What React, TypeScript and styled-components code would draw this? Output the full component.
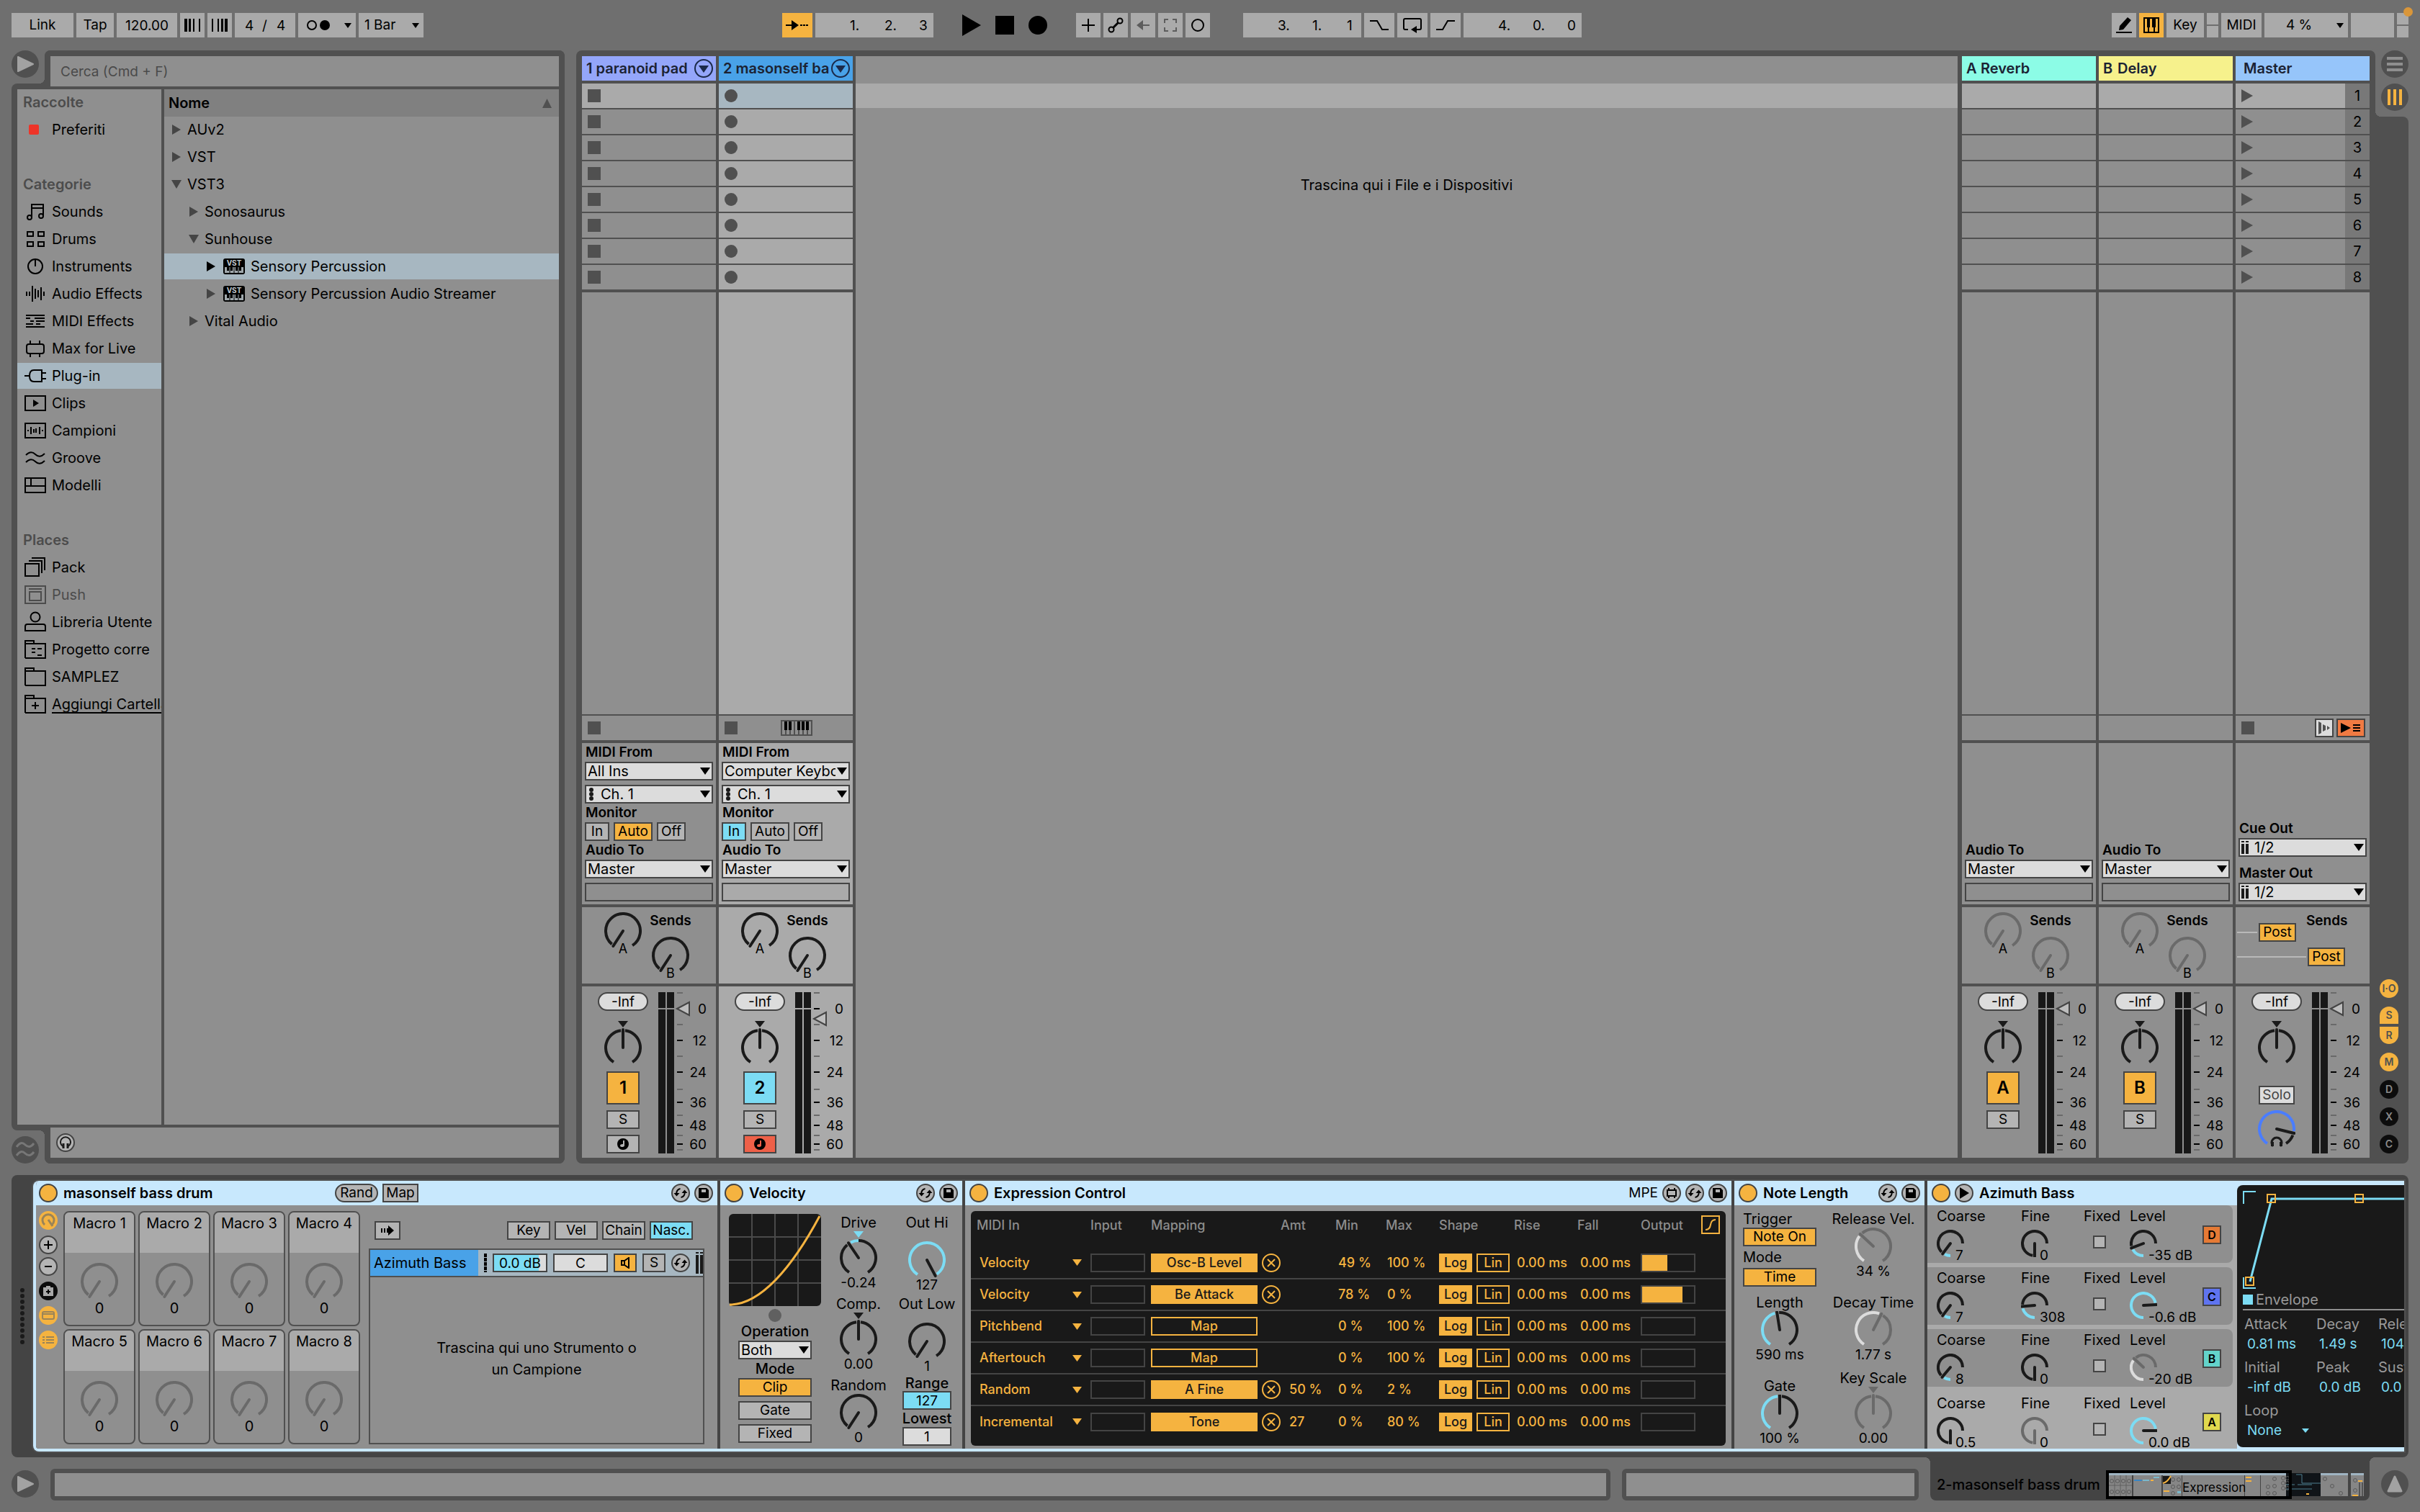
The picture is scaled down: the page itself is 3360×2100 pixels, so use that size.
import React, { ReactNode } from 'react';
import styled, { createGlobalStyle, css } from 'styled-components';

const c = {
  page: '#6f6f6f',
  frame: '#505050',
  deep: '#444444',
  surface: '#8f8f8f',
  light: '#aaaaaa',
  header: '#808080',
  number: '#787878',
  control: '#b4b4b4',
  field: '#dcdcdc',
  select: '#a7b7c1',
  orange: '#f5b340',
  cyan: '#7cdcf4',
  title: '#c8e8fd',
  ink: '#1a1a1a',
  dim: '#6a6a6a',
  red: '#ee6048',
};

const Global = createGlobalStyle`
  *, *::before, *::after { box-sizing: border-box; }
  html, body { margin: 0; background: ${c.page}; }
  body, button, input, select, table {
    font-family: Inter, "Liberation Sans", sans-serif;
    font-size: 20px;
    font-weight: 400;
    line-height: 22px;
    color: #000;
  }
  button, input, select { margin: 0; padding: 0; border: 0; border-radius: 0; outline: 0; }
  button, input { font-size: 19px; }
  svg { display: block; flex: none; }
`;

const Page = styled.div`
  min-height: 100vh;
  display: flex;
  flex-direction: column;
  overflow: hidden;
`;

/* ---------- shared controls ---------- */

const HiddenRange = styled.input`
  position: absolute;
  inset: 0;
  width: 100%;
  height: 100%;
  opacity: 0;
`;

const Button = styled.button<{ $w?: number; $h?: number; $bg?: string; $pill?: boolean; $bold?: boolean }>`
  flex: none;
  display: flex;
  align-items: center;
  justify-content: center;
  width: ${(p) => p.$w ?? 26}px;
  height: ${(p) => p.$h ?? 26}px;
  background: ${(p) => p.$bg ?? c.control};
  border: 2px solid ${c.deep};
  border-radius: ${(p) => (p.$pill ? 13 : 0)}px;
  font-weight: ${(p) => (p.$bold ? 600 : 400)};
  font-size: ${(p) => ((p.$h ?? 26) > 30 ? 24 : 19)}px;
  white-space: nowrap;
`;

const Field = styled.input<{ $w?: number; $bg?: string; $pill?: boolean }>`
  flex: none;
  width: ${(p) => p.$w ?? 68}px;
  height: 26px;
  border: 2px solid ${c.deep};
  border-radius: ${(p) => (p.$pill ? 13 : 0)}px;
  background: ${(p) => p.$bg ?? c.field};
  text-align: center;
`;

const SelectWrap = styled.span<{ $w?: number }>`
  position: relative;
  display: block;
  width: ${(p) => (p.$w ? `${p.$w}px` : '100%')};
  height: 26px;
`;
const SelectBox = styled.select<{ $pad: number }>`
  appearance: none;
  width: 100%;
  height: 26px;
  border: 2px solid ${c.deep};
  background: ${c.field};
  padding: 0 18px 0 ${(p) => p.$pad}px;
`;
const SelectMark = styled.svg<{ $left?: boolean }>`
  position: absolute;
  top: ${(p) => (p.$left ? 4 : 8)}px;
  ${(p) => (p.$left ? 'left: 4px;' : 'right: 4px;')}
  pointer-events: none;
`;

function Select({ label, value, w, mark }: { label: string; value: string; w?: number; mark?: 'dots' | 'bars' }) {
  return (
    <SelectWrap $w={w}>
      <SelectBox aria-label={label} defaultValue={value} $pad={mark ? 20 : 2}>
        <option>{value}</option>
      </SelectBox>
      {mark === 'dots' && (
        <SelectMark $left width="10" height="18" viewBox="0 0 10 18" fill={c.ink}>
          <circle cx="5" cy="3" r="3" />
          <circle cx="5" cy="9" r="3" />
          <circle cx="5" cy="15" r="3" />
        </SelectMark>
      )}
      {mark === 'bars' && (
        <SelectMark $left width="10" height="18" viewBox="0 0 10 18" fill={c.ink}>
          <path d="M0 0h4v2H0zM6 0h4v2H6zM0 4h4v14H0zM6 4h4v14H6z" />
        </SelectMark>
      )}
      <SelectMark width="14" height="10" viewBox="0 0 14 10">
        <path d="M0 0H14L7 10Z" fill="#000" />
      </SelectMark>
    </SelectWrap>
  );
}

const rad = (deg: number) => (deg * Math.PI) / 180;
const arc = (cx: number, cy: number, r: number, from: number, to: number) => {
  if (to - from < 1) return '';
  const x1 = cx + r * Math.sin(rad(from));
  const y1 = cy - r * Math.cos(rad(from));
  const x2 = cx + r * Math.sin(rad(to));
  const y2 = cy - r * Math.cos(rad(to));
  return `M${x1} ${y1}A${r} ${r} 0 ${to - from > 180 ? 1 : 0} 1 ${x2} ${y2}`;
};

const KnobWrap = styled.span<{ $w: number }>`
  position: relative;
  display: block;
  width: ${(p) => p.$w}px;
`;

type KnobProps = {
  name: string;
  angle?: number;
  color?: string;
  line?: string;
  needle?: string;
  centered?: boolean;
  small?: boolean;
  letter?: string;
  cue?: boolean;
};

function Knob({ name, angle = -147, color, line = c.ink, needle, centered, small, letter, cue }: KnobProps) {
  const R = small ? 19 : 26;
  const r = R - 2;
  const top = centered ? 11 : 0;
  const cy = R + top;
  const start = small ? -180 : -147;
  const end = small ? 90 : 147;
  const gap = small ? 9 : 7;
  const value = color ?? line;
  const h = R * 2 + top;
  const nx = R + (R - 1) * Math.sin(rad(angle));
  const ny = cy - (R - 1) * Math.cos(rad(angle));
  const before = centered ? arc(R, cy, r, start, Math.min(angle - gap, 0)) : arc(R, cy, r, start, angle - gap);
  const after = centered && angle < 0 ? 0 : angle + gap;
  return (
    <KnobWrap $w={R * 2}>
      <svg width={R * 2} height={h} viewBox={`0 0 ${R * 2} ${h}`} fill="none" strokeWidth="4">
        {centered && <path d={`M${R - 7} 0h14l-7 9z`} fill={value} />}
        <path d={before} stroke={centered ? line : value} />
        <path d={arc(R, cy, r, after, end)} stroke={line} />
        {centered && angle < 0 && <path d={arc(R, cy, r, angle + gap, 0)} stroke={value} />}
        <path d={`M${R} ${cy}L${nx} ${ny}`} stroke={needle ?? line} strokeLinecap="round" />
        {letter && (
          <text x={R} y={cy + 31} textAnchor="middle" fontSize="18" fill="#000" stroke="none">
            {letter}
          </text>
        )}
        {cue && (
          <g stroke={c.ink} strokeWidth="3">
            <path d="M21 50a7 7 0 1 1 10 0" />
            <path d="M20 44v6M32 44v6" strokeWidth="4" />
          </g>
        )}
      </svg>
      <HiddenRange type="range" aria-label={name} />
    </KnobWrap>
  );
}

const RoundButton = styled.button<{ $bg?: string; $d?: number; $plain?: boolean }>`
  flex: none;
  display: flex;
  align-items: center;
  justify-content: center;
  width: ${(p) => p.$d ?? 26}px;
  height: ${(p) => p.$d ?? 26}px;
  border-radius: 50%;
  border: ${(p) => (p.$plain ? '0' : `2px solid ${c.deep}`)};
  background: ${(p) => p.$bg ?? c.control};
`;

const SwapIcon = () => (
  <svg width="20" height="20" viewBox="0 0 20 20" fill="none" stroke="#000" strokeWidth="2">
    <path d="M4.500 11.500A6 6 0 0 1 9.500 4" />
    <path d="M15.500 8.500A6 6 0 0 1 10.500 16" />
    <path d="M0.500 10h8l-4 4.500zM11.500 10h8l-4-4.500z" fill="#000" stroke="none" />
  </svg>
);
const SaveIcon = () => (
  <svg width="16" height="16" viewBox="0 0 16 16">
    <path d="M1 1H12L15 4V15H1Z" fill="#000" />
    <path d="M5 3H11V7H5Z" fill={c.control} />
  </svg>
);
const Swap = () => (
  <RoundButton aria-label="Hot-swap">
    <SwapIcon />
  </RoundButton>
);
const Save = () => (
  <RoundButton aria-label="Save preset">
    <SaveIcon />
  </RoundButton>
);

/* ---------- toolbar ---------- */

const Toolbar = styled.header`
  display: grid;
  grid-template-columns: minmax(572px, 1070fr) auto minmax(412px, 1148fr);
  padding: 18px 16px;
`;
const Group = styled.div<{ $end?: boolean }>`
  display: flex;
  gap: 4px;
  justify-content: ${(p) => (p.$end ? 'flex-end' : 'flex-start')};
`;
const cell = css<{ $w: number; $on?: boolean }>`
  flex: none;
  width: ${(p) => p.$w}px;
  height: 34px;
  background: ${(p) => (p.$on ? c.orange : c.light)};
`;
const Tool = styled.button<{ $w: number; $on?: boolean }>`
  ${cell}
  display: flex;
  align-items: center;
  justify-content: center;
`;
const ToolInput = styled.input<{ $w: number; $on?: boolean }>`
  ${cell}
  text-align: center;
`;
const Bars = styled.div<{ $w: number; $pad?: number }>`
  ${cell}
  display: flex;
  padding-left: ${(p) => p.$pad ?? 0}px;
`;
const Digit = styled.input<{ $w: number }>`
  width: ${(p) => p.$w}px;
  height: 34px;
  background: transparent;
`;
const ToolSelectWrap = styled.span<{ $w: number }>`
  ${cell}
  position: relative;
`;
const ToolSelect = styled.select<{ $pad: number }>`
  appearance: none;
  width: 100%;
  height: 34px;
  background: transparent;
  padding: 0 20px 0 ${(p) => p.$pad}px;
  font-size: 19px;
`;
const ToolArrow = styled.svg`
  position: absolute;
  right: 6px;
  top: 14px;
  pointer-events: none;
`;
const ToolMark = styled.svg`
  position: absolute;
  left: 12px;
  top: 9px;
  pointer-events: none;
`;
const Transport = styled.div`
  display: flex;
  gap: 20px;
  margin: 0 36px;
`;
const TransportButton = styled.button`
  display: flex;
  align-items: center;
  background: none;
  height: 34px;
`;
const LoopGroup = styled(Group)`
  margin-left: 42px;
`;
const Lamps = styled.div`
  display: flex;
  flex-direction: column;
  gap: 2px;
  width: 16px;
  position: relative;
`;
const Lamp = styled.span`
  height: 16px;
  background: ${c.light};
`;
const Beacon = styled.span`
  position: absolute;
  right: -6px;
  top: -8px;
  width: 13px;
  height: 13px;
  border-radius: 50%;
  background: #d9963a;
`;

function Position({ label, parts }: { label: string; parts: string[] }) {
  return (
    <Bars $w={164} $pad={48}>
      {parts.map((p, i) => (
        <Digit key={i} aria-label={`${label} ${i + 1}`} $w={i === 2 ? 18 : 48} defaultValue={i < 2 ? `${p}.` : p} />
      ))}
    </Bars>
  );
}

function TopBar() {
  return (
    <Toolbar>
      <Group>
        <Tool $w={86}>Link</Tool>
        <Tool $w={52}>Tap</Tool>
        <ToolInput $w={84} aria-label="Tempo" defaultValue="120.00" />
        <Tool $w={34} aria-label="Nudge down">
          <svg width="22" height="18" viewBox="0 0 22 18">
            <path d="M0 0h4v18H0zM6 0h3v18H6zM12 0h2v18h-2zM20 0h2v18h-2z" />
          </svg>
        </Tool>
        <Tool $w={34} aria-label="Nudge up">
          <svg width="22" height="18" viewBox="0 0 22 18">
            <path d="M0 0h2v18H0zM8 0h2v18H8zM13 0h3v18h-3zM18 0h4v18h-4z" />
          </svg>
        </Tool>
        <Bars $w={84} $pad={14}>
          <Digit $w={24} aria-label="Time signature numerator" defaultValue="4" />
          <Digit $w={20} aria-label="Divider" readOnly value="/" />
          <Digit $w={20} aria-label="Time signature denominator" defaultValue="4" />
        </Bars>
        <ToolSelectWrap $w={80}>
          <ToolSelect aria-label="Metronome" $pad={12} />
          <ToolMark width="34" height="16" viewBox="0 0 34 16">
            <circle cx="7" cy="8" r="6" fill="none" stroke="#000" strokeWidth="2" />
            <circle cx="25" cy="8" r="7" />
          </ToolMark>
          <ToolArrow width="10" height="7" viewBox="0 0 10 7">
            <path d="M0 0H10L5 7Z" />
          </ToolArrow>
        </ToolSelectWrap>
        <ToolSelectWrap $w={90}>
          <ToolSelect aria-label="Quantization" $pad={8} defaultValue="1 Bar">
            <option>1 Bar</option>
          </ToolSelect>
          <ToolArrow width="10" height="7" viewBox="0 0 10 7">
            <path d="M0 0H10L5 7Z" />
          </ToolArrow>
        </ToolSelectWrap>
      </Group>

      <Group>
        <Tool $w={42} $on aria-label="Follow">
          <svg width="32" height="14" viewBox="0 0 32 14">
            <path d="M0 6h8V0l10 7-10 7V8H0zM20 6h3v2h-3zM24 6h3v2h-3zM28 6h3v2h-3z" />
          </svg>
        </Tool>
        <Position label="Position" parts={['1', '2', '3']} />
        <Transport>
          <TransportButton aria-label="Play">
            <svg width="26" height="30" viewBox="0 0 26 30">
              <path d="M0 0L26 15L0 30Z" />
            </svg>
          </TransportButton>
          <TransportButton aria-label="Stop">
            <svg width="26" height="26" viewBox="0 0 26 26">
              <path d="M0 0H26V26H0Z" />
            </svg>
          </TransportButton>
          <TransportButton aria-label="Record">
            <svg width="26" height="26" viewBox="0 0 26 26">
              <circle cx="13" cy="13" r="13" />
            </svg>
          </TransportButton>
        </Transport>
        <Tool $w={34} aria-label="Overdub">
          <svg width="18" height="18" viewBox="0 0 18 18" stroke="#000" strokeWidth="2">
            <path d="M9 0V18M0 9H18" />
          </svg>
        </Tool>
        <Tool $w={34} aria-label="Automation arm">
          <svg width="22" height="22" viewBox="0 0 22 22" fill="none" stroke="#000" strokeWidth="2">
            <circle cx="5" cy="17" r="3.500" />
            <circle cx="17" cy="5" r="3.500" />
            <path d="M7.500 14.500L14.500 7.500" strokeWidth="3" />
          </svg>
        </Tool>
        <Tool $w={34} aria-label="Re-enable automation">
          <svg width="18" height="14" viewBox="0 0 18 14">
            <path d="M18 6H9V0L0 7l9 7V8h9z" fill="#5c5c5c" />
          </svg>
        </Tool>
        <Tool $w={34} aria-label="Capture MIDI">
          <svg width="18" height="18" viewBox="0 0 18 18" fill="none" stroke="#5c5c5c" strokeWidth="2">
            <path d="M1 6V1H6M12 1H17V6M17 12V17H12M6 17H1V12" />
          </svg>
        </Tool>
        <Tool $w={34} aria-label="Session record">
          <svg width="18" height="18" viewBox="0 0 18 18" fill="none" stroke="#000" strokeWidth="2">
            <circle cx="9" cy="9" r="8" />
          </svg>
        </Tool>
        <LoopGroup>
          <Position label="Loop start" parts={['3', '1', '1']} />
          <Tool $w={42} aria-label="Punch in">
            <svg width="26" height="14" viewBox="0 0 26 14" fill="none" stroke="#000" strokeWidth="2">
              <path d="M0 1H10L17 13H26" />
            </svg>
          </Tool>
          <Tool $w={42} aria-label="Loop">
            <svg width="28" height="22" viewBox="0 0 28 22" fill="none" stroke="#000" strokeWidth="2">
              <path d="M8 17H4Q2 17 2 15V4Q2 2 4 2H24Q26 2 26 4V15Q26 17 24 17H18" />
              <path d="M20 12V22L12 17Z" fill="#000" stroke="none" />
            </svg>
          </Tool>
          <Tool $w={42} aria-label="Punch out">
            <svg width="26" height="14" viewBox="0 0 26 14" fill="none" stroke="#000" strokeWidth="2">
              <path d="M0 13H9L16 1H26" />
            </svg>
          </Tool>
          <Position label="Loop length" parts={['4', '0', '0']} />
        </LoopGroup>
      </Group>

      <Group $end>
        <Tool $w={34} aria-label="Draw mode">
          <svg width="22" height="22" viewBox="0 0 22 22">
            <path d="M4 18L5 12L16 0L21 4L10 17ZM0 20H22V22H0Z" />
          </svg>
        </Tool>
        <Tool $w={34} $on aria-label="Computer MIDI keyboard">
          <svg width="22" height="22" viewBox="0 0 22 22">
            <path d="M1 1H21V21H1Z" fill="none" stroke="#000" strokeWidth="2" />
            <path d="M5 1h4v13H5zM12 1h5v13h-5zM6 14h2v7H6zM14 14h2v7h-2z" />
          </svg>
        </Tool>
        <Tool $w={52}>Key</Tool>
        <Lamps>
          <Lamp />
          <Lamp />
        </Lamps>
        <Tool $w={56}>MIDI</Tool>
        <ToolSelectWrap $w={116}>
          <ToolSelect aria-label="CPU load" $pad={30} defaultValue="4 %">
            <option>4 %</option>
          </ToolSelect>
          <ToolArrow width="10" height="7" viewBox="0 0 10 7">
            <path d="M0 0H10L5 7Z" />
          </ToolArrow>
        </ToolSelectWrap>
        <Tool $w={60} aria-label="Disk overload" />
        <Lamps>
          <Lamp />
          <Lamp />
          <Beacon />
        </Lamps>
      </Group>
    </Toolbar>
  );
}

/* ---------- browser ---------- */

const Main = styled.main`
  flex: 1;
  display: flex;
  padding: 0 16px;
  min-height: 1546px;
`;
const Browser = styled.aside`
  flex: none;
  width: 768px;
  margin-right: 16px;
  display: flex;
  flex-direction: column;
`;
const BrowserEdge = styled.div<{ $bottom?: boolean }>`
  display: flex;
  gap: 8px;
  align-items: ${(p) => (p.$bottom ? 'flex-end' : 'flex-start')};
`;
const Toggle = styled.button`
  flex: none;
  display: flex;
  align-items: center;
  justify-content: center;
  width: 38px;
  height: 38px;
  border-radius: 50%;
  background: ${c.frame};
`;
/* rounds an inner corner where a frame turns */
const fillet = (at: string, color: string) => css`
  content: '';
  position: absolute;
  width: 8px;
  height: 8px;
  background: radial-gradient(circle at ${at}, transparent 8px, ${color} 8px);
`;
const EdgePanel = styled.div<{ $bottom?: boolean }>`
  position: relative;
  flex: 1;
  height: 50px;
  background: ${c.surface};
  border: 8px solid ${c.frame};
  ${(p) =>
    p.$bottom
      ? 'border-top: 0; margin-top: -4px; border-radius: 0 0 8px 8px; padding: 8px;'
      : 'border-bottom: 0; margin-bottom: -4px; border-radius: 8px 8px 0 0;'}
  &::before {
    ${(p) => (p.$bottom ? fillet('0 100%', c.frame) : fillet('0 0', c.frame))}
    left: -16px;
    top: ${(p) => (p.$bottom ? 4 : 30)}px;
  }
`;
const Search = styled.input`
  width: 100%;
  height: 42px;
  padding-left: 14px;
  background: transparent;
  &::placeholder { color: #4a4a4a; opacity: 1; }
`;
const BrowserBody = styled.div`
  flex: 1;
  display: flex;
  gap: 4px;
  padding: 8px;
  background: ${c.frame};
  border-radius: 8px 0 0 8px;
`;
const Sidebar = styled.nav`
  width: 200px;
  background: ${c.surface};
  overflow: hidden;
`;
const SideRow = styled.button<{ $on?: boolean; $head?: boolean; $dim?: boolean; $link?: boolean }>`
  display: flex;
  align-items: center;
  gap: 8px;
  width: 100%;
  height: 36px;
  margin-bottom: 2px;
  padding-left: ${(p) => (p.$head ? 8 : 10)}px;
  background: ${(p) => (p.$on ? c.select : 'transparent')};
  color: ${(p) => (p.$head || p.$dim ? '#4c4c4c' : '#000')};
  font-size: 20px;
  font-weight: ${(p) => (p.$head ? 600 : 400)};
  white-space: nowrap;
  overflow: hidden;
  text-decoration: ${(p) => (p.$link ? 'underline' : 'none')};
  text-decoration-thickness: 2px;
  text-decoration-skip-ink: none;
  text-underline-offset: 4px;
`;
const SideGap = styled.div`
  height: 38px;
`;
const SideText = styled.span<{ $full?: boolean }>`
  flex: 1;
  text-align: left;
  overflow: hidden;
  line-height: 26px;
  margin-right: ${(p) => (p.$full ? 0 : 8)}px;
`;
const Listing = styled.div`
  flex: 1;
  background: ${c.surface};
`;
const ListHead = styled.div`
  display: flex;
  align-items: center;
  justify-content: space-between;
  height: 38px;
  padding: 0 10px 0 6px;
  background: ${c.header};
  font-weight: 600;
`;
const TreeRow = styled.div<{ $depth: number; $on?: boolean }>`
  display: flex;
  align-items: center;
  gap: 8px;
  height: 36px;
  margin-bottom: 2px;
  padding-left: ${(p) => 10 + p.$depth * 24}px;
  background: ${(p) => (p.$on ? c.select : 'transparent')};
`;

const sideIcons: Record<string, ReactNode> = {
  sounds: (
    <>
      <path d="M10 22V5H26V20M10 10H26" />
      <circle cx="7" cy="23" r="3" />
      <circle cx="23" cy="21" r="3" />
    </>
  ),
  drums: <path d="M4 5H12V11H4ZM19 5H27V11H19ZM4 19H12V25H4ZM19 19H27V25H19Z" />,
  instruments: (
    <>
      <circle cx="15" cy="15" r="10" />
      <path d="M15 5V15" />
    </>
  ),
  audio: <path d="M3 12V18M7 12V18M11 4V26M15 8V22M19 10V20M23 6V24M27 12V18" />,
  midi: <path d="M2 7H28M2 11H8M14 11H28M8 15H13M16 15H28M2 19H12M16 19H22M2 23H28" />,
  max: (
    <>
      <rect x="3" y="9" width="24" height="13" rx="3" />
      <path d="M8 4V9M21 4V9M8 22V27M21 22V27" />
    </>
  ),
  plug: <path d="M0 15H7M24 7H13Q7 7 7 15T13 23H24ZM24 11H30M24 19H30" />,
  clips: (
    <>
      <path d="M1 5H29V25H1Z" />
      <path d="M12 10L20 15L12 20Z" fill="currentColor" stroke="none" />
    </>
  ),
  samples: <path d="M1 5H29V25H1ZM5 14V16M9 10V20M13 13V18M16 12V18M21 10V20M25 14V16" />,
  groove: <path d="M2 11Q9 4 15 10T28 9M2 21Q9 14 15 20T28 19" />,
  templates: <path d="M1 5H29V25H1ZM1 16H29M9 5V16" />,
  pack: <path d="M1 10H20V27H1ZM6 6H24V23M10 2H28V19" />,
  push: <path d="M1 3H29V27H1ZM6 7H24M7 11H23V23H7Z" />,
  user: (
    <>
      <circle cx="15" cy="8" r="6.500" />
      <path d="M1 27V21Q1 18 4 18H26Q29 18 29 21V27Z" />
    </>
  ),
  project: <path d="M1 27V3H13V7M1 7H29V27H1M10 14H15M18 14H24M10 19H15M18 23H24" />,
  folder: <path d="M1 27V3H13V7M1 7H29V27H1" />,
  add: <path d="M1 27V3H13V7M1 7H29V27H1M15 12V22M10 17H20" />,
};

const SideIcon = ({ kind }: { kind: string }) => (
  <svg width="30" height="30" viewBox="0 0 30 30" fill="none" stroke="currentColor" strokeWidth="2">
    {sideIcons[kind]}
  </svg>
);

const categories: [string, string][] = [
  ['sounds', 'Sounds'],
  ['drums', 'Drums'],
  ['instruments', 'Instruments'],
  ['audio', 'Audio Effects'],
  ['midi', 'MIDI Effects'],
  ['max', 'Max for Live'],
  ['plug', 'Plug-in'],
  ['clips', 'Clips'],
  ['samples', 'Campioni'],
  ['groove', 'Groove'],
  ['templates', 'Modelli'],
];
const places: [string, string][] = [
  ['pack', 'Pack'],
  ['push', 'Push'],
  ['user', 'Libreria Utente'],
  ['project', 'Progetto corre'],
  ['folder', 'SAMPLEZ'],
];

const tree: { name: string; depth: number; open?: boolean; on?: boolean; vst?: boolean }[] = [
  { name: 'AUv2', depth: 0 },
  { name: 'VST', depth: 0 },
  { name: 'VST3', depth: 0, open: true },
  { name: 'Sonosaurus', depth: 1 },
  { name: 'Sunhouse', depth: 1, open: true },
  { name: 'Sensory Percussion', depth: 2, on: true, vst: true },
  { name: 'Sensory Percussion Audio Streamer', depth: 2, vst: true },
  { name: 'Vital Audio', depth: 1 },
];

const Fold = ({ open, color = '#454545' }: { open?: boolean; color?: string }) => (
  <svg width="14" height="14" viewBox="0 0 14 14">
    <path d={open ? 'M0 1H14L7 13Z' : 'M1 0L13 7L1 14Z'} fill={color} />
  </svg>
);

const VstIcon = () => (
  <svg width="32" height="22" viewBox="-2 0 32 22">
    <rect width="30" height="22" rx="3" />
    <path d="M2 12H28V20H2Z" fill="#a0a8ac" />
    <path d="M5 12h3v5H5zM10 12h3v5h-3zM17 12h3v5h-3zM22 12h3v5h-3zM8.500 12h1v8h-1zM14.500 12h1v8h-1zM20.500 12h1v8h-1z" />
    <text x="15" y="10" textAnchor="middle" fontSize="10" fontWeight="700" fill="#c4ccd0">
      VST
    </text>
  </svg>
);

const Headphones = () => (
  <svg width="16" height="18" viewBox="0 0 16 18" fill="none" stroke={c.ink}>
    <path d="M4 14A7 7 0 1 1 12 14" strokeWidth="2" />
    <path d="M5 10V17M11 10V17" strokeWidth="3" />
  </svg>
);

function BrowserPane() {
  return (
    <Browser>
      <BrowserEdge>
        <Toggle aria-label="Hide browser">
          <svg width="24" height="24" viewBox="0 0 24 24">
            <path d="M2 2L23 12L2 22Z" fill="#a2a2a2" stroke="#a2a2a2" strokeWidth="2" strokeLinejoin="round" />
          </svg>
        </Toggle>
        <EdgePanel>
          <Search aria-label="Cerca" placeholder="Cerca (Cmd + F)" />
        </EdgePanel>
      </BrowserEdge>
      <BrowserBody>
        <Sidebar>
          <SideRow as="div" $head>
            Raccolte
          </SideRow>
          <SideRow>
            <svg width="30" height="30" viewBox="0 0 30 30">
              <rect x="6" y="8" width="14" height="14" rx="2" fill="#ee3428" />
            </svg>
            <SideText>Preferiti</SideText>
          </SideRow>
          <SideGap />
          <SideRow as="div" $head>
            Categorie
          </SideRow>
          {categories.map(([icon, name]) => (
            <SideRow key={name} $on={icon === 'plug'}>
              <SideIcon kind={icon} />
              <SideText>{name}</SideText>
            </SideRow>
          ))}
          <SideGap />
          <SideRow as="div" $head>
            Places
          </SideRow>
          {places.map(([icon, name]) => (
            <SideRow key={name} $dim={icon === 'push'}>
              <SideIcon kind={icon} />
              <SideText>{name}</SideText>
            </SideRow>
          ))}
          <SideRow $link>
            <SideIcon kind="add" />
            <SideText $full>Aggiungi Cartella</SideText>
          </SideRow>
        </Sidebar>
        <Listing>
          <ListHead>
            Nome
            <svg width="13" height="13" viewBox="0 0 13 13">
              <path d="M0 13H13L6.500 0Z" fill={c.frame} />
            </svg>
          </ListHead>
          {tree.map((n) => (
            <TreeRow key={n.name} $depth={n.depth} $on={n.on}>
              <Fold open={n.open} color={n.on ? '#000' : undefined} />
              {n.vst && <VstIcon />}
              {n.name}
            </TreeRow>
          ))}
        </Listing>
      </BrowserBody>
      <BrowserEdge $bottom>
        <Toggle aria-label="Groove pool">
          <svg width="26" height="28" viewBox="0 0 26 28" fill="none" stroke="#777" strokeWidth="3">
            <path d="M1 10Q7 1 13 7T25 5M1 22Q7 13 13 19T25 17" />
          </svg>
        </Toggle>
        <EdgePanel $bottom>
          <RoundButton aria-label="Preview">
            <Headphones />
          </RoundButton>
        </EdgePanel>
      </BrowserEdge>
    </Browser>
  );
}

/* ---------- session ---------- */

const Session = styled.section`
  flex: 1;
  min-width: 0;
  display: flex;
  gap: 4px;
  padding: 8px;
  background: ${c.frame};
  border-radius: 8px 8px 0 8px;
`;
const DropArea = styled.div`
  flex: 1;
  margin-right: 2px;
  background: ${c.surface};
  text-align: center;
`;
const DropBand = styled.div`
  height: 34px;
  margin: 38px 0 96px;
  background: ${c.light};
`;
const Strip = styled.div`
  flex: none;
  width: 186px;
  display: flex;
  flex-direction: column;
  gap: 4px;
`;
const StripHead = styled.div<{ $bg: string }>`
  display: flex;
  align-items: center;
  justify-content: space-between;
  height: 34px;
  padding: 0 4px 0 6px;
  background: ${(p) => p.$bg};
  color: #1b2233;
  font-weight: 600;
  white-space: nowrap;
`;
const StripName = styled.span<{ $pad?: boolean }>`
  display: flex;
  padding-left: ${(p) => (p.$pad ? 5 : 0)}px;
`;
const StripKey = styled.span`
  width: 20px;
`;
const Slots = styled.div`
  display: flex;
  flex-direction: column;
  gap: 2px;
`;
const Slot = styled.div<{ $bg: string }>`
  display: flex;
  align-items: center;
  justify-content: space-between;
  height: 34px;
  padding-left: 8px;
  background: ${(p) => p.$bg};
`;
const SlotNumber = styled.span`
  display: flex;
  align-items: center;
  justify-content: center;
  width: 34px;
  height: 34px;
  background: ${c.number};
`;
const StripBody = styled.div<{ $bg: string }>`
  flex: 1;
  background: ${(p) => p.$bg};
  margin-bottom: -2px;
`;
const StopRow = styled.div`
  display: flex;
  align-items: center;
  gap: 4px;
  height: 34px;
  padding: 0 6px 0 8px;
  background: ${c.surface};
`;
const Push = styled.span`
  flex: 1;
`;
const PianoSlot = styled.span`
  margin-left: 56px;
`;
const Panel = styled.div<{ $bg: string; $h: number }>`
  height: ${(p) => p.$h}px;
  background: ${(p) => p.$bg};
`;
const IoPanel = styled(Panel)`
  display: flex;
  flex-direction: column;
  justify-content: flex-end;
  gap: 6px;
  padding: 0 4px 4px;
`;
const IoBlock = styled.div`
  display: flex;
  flex-direction: column;
`;
const IoLabel = styled.span`
  height: 26px;
  padding-left: 1px;
  line-height: 26px;
  font-size: 19px;
  font-weight: 600;
`;
const IoSpacer = styled.div`
  height: 4px;
`;
const Monitor = styled.div`
  display: flex;
  gap: 6px;
`;
const Blank = styled.div`
  height: 26px;
  border: 2px solid ${c.deep};
`;
const SendsPanel = styled(Panel)`
  display: flex;
  gap: 14px;
  padding: 7px 0 0 31px;
  svg { overflow: visible; }
`;
const SendColumn = styled.div`
  display: flex;
  flex-direction: column;
  align-items: center;
  width: 52px;
`;
const SendsLabel = styled.span`
  height: 34px;
  line-height: 24px;
  font-size: 19px;
  font-weight: 600;
  white-space: nowrap;
`;
const MasterSends = styled(Panel)`
  display: grid;
  grid-template-columns: 28px 68px 1fr;
  grid-template-rows: 15px 34px 34px;
  padding: 7px 0 0 2px;
`;
const PostLabel = styled.span`
  grid-column: 3;
  padding-left: 0;
  line-height: 24px;
  font-size: 19px;
  font-weight: 600;
`;
const PostRow = styled.div`
  grid-column: 1 / -1;
  display: flex;
  align-items: center;
  gap: 2px;
  height: 26px;
`;
const PostWire = styled.span<{ $w: number }>`
  width: ${(p) => p.$w}px;
  height: 2px;
  background: #b8b8b8;
`;
const Mixer = styled(Panel)`
  display: flex;
  gap: 14px;
  padding: 8px 0 0 22px;
`;
const MixColumn = styled.div`
  display: flex;
  flex-direction: column;
  align-items: center;
  gap: 8px;
  width: 70px;
`;
const PanBox = styled.div`
  padding: 6px 0 0;
  margin-bottom: -1px;
`;
const SoloBox = styled.div`
  padding-top: 20px;
`;
const SoloButton = styled(Button)`
  color: ${c.deep};
`;
const MeterBox = styled.div`
  position: relative;
`;

const majors: [number, string][] = [
  [23, '0'],
  [67, '12'],
  [111, '24'],
  [153, '36'],
  [185, '48'],
  [211, '60'],
];
const minors = [1, 45, 89, 135, 171, 199, 219];

function Meter({ fader = 23, bg }: { fader?: number; bg: string }) {
  return (
    <MeterBox>
      <svg width="70" height="224" viewBox="0 0 70 224">
        <path d="M0 0H10V224H0ZM12 0H22V224H12Z" fill="#181818" />
        <path d="M0 22H22V24H0Z" fill={bg} />
        {minors.map((y) => (
          <path key={y} d={`M26 ${y - 1}h8v2h-8z`} fill={c.dim} />
        ))}
        {majors.map(([y, t]) => (
          <g key={t}>
            <path d={`M26 ${y - 1}h8v2h-8z`} />
            <text x="67" y={y + 7} textAnchor="end" fontSize="19">
              {t}
            </text>
          </g>
        ))}
        <path d={`M26 ${fader}L43 ${fader - 9}V${fader + 9}Z`} fill="#bdbdbd" stroke={c.deep} strokeWidth="2" />
      </svg>
      <HiddenRange type="range" aria-label="Volume" />
    </MeterBox>
  );
}

type StripData = {
  name: string;
  letter?: string;
  color: string;
  kind: 'track' | 'return' | 'master';
  selected?: boolean;
  input?: string;
  monitor?: string;
  activator?: string;
  armed?: boolean;
};

const monitorModes: [string, number][] = [
  ['In', 34],
  ['Auto', 54],
  ['Off', 40],
];

function ChannelStrip(s: StripData) {
  const bg = s.selected ? c.light : c.surface;
  return (
    <Strip>
      <StripHead $bg={s.color}>
        <StripName $pad={s.kind === 'master'}>
          {s.letter && <StripKey>{s.letter}</StripKey>}
          {s.name}
        </StripName>
        {s.kind === 'track' && (
          <svg width="26" height="26" viewBox="0 0 26 26">
            <circle cx="13" cy="13" r="12" fill="none" stroke="#1b2a4a" strokeWidth="2" />
            <path d="M6 9H20L13 19Z" fill="#1b2a4a" />
          </svg>
        )}
      </StripHead>
      <Slots>
        {[1, 2, 3, 4, 5, 6, 7, 8].map((n) => (
          <Slot key={n} $bg={n === 1 ? (s.selected ? c.select : c.light) : bg}>
            {s.kind !== 'return' && (
              <svg width="18" height="18" viewBox="0 0 18 18" fill={c.frame}>
                {s.kind === 'master' ? (
                  <path d="M0 0L16 9L0 18Z" />
                ) : s.selected ? (
                  <circle cx="9" cy="9" r="9" />
                ) : (
                  <path d="M0 0H18V18H0Z" />
                )}
              </svg>
            )}
            {s.kind === 'master' && <SlotNumber>{n}</SlotNumber>}
          </Slot>
        ))}
      </Slots>
      <StripBody $bg={bg} />
      <StopRow>
        {s.kind !== 'return' && (
          <svg width="18" height="18" viewBox="0 0 18 18">
            <path d="M0 0H18V18H0Z" fill={c.frame} />
          </svg>
        )}
        {s.selected && (
          <PianoSlot>
            <svg width="44" height="22" viewBox="0 0 44 22">
              <path d="M1 1H43V21H1ZM7 1V21M13 1V21M19 1V21M25 1V21M31 1V21M37 1V21" fill={c.surface} stroke={c.frame} strokeWidth="2" />
              <path d="M5 2h4v12H5zM11 2h4v12h-4zM23 2h4v12h-4zM29 2h4v12h-4zM35 2h4v12h-4z" />
            </svg>
          </PianoSlot>
        )}
        {s.kind === 'master' && (
          <>
            <Push />
            <Button $bg={c.field} aria-label="Stop all clips">
              <svg width="18" height="18" viewBox="0 0 18 18" fill={c.frame}>
                <path d="M1 0L5 2V16L1 18ZM7 4L11 6V12L7 14ZM13 6L17 9L13 12Z" />
              </svg>
            </Button>
            <Button $w={40} $bg="#f07a42" aria-label="Back to arrangement">
              <svg width="28" height="14" viewBox="0 0 28 14">
                <path d="M0 0L14 7L0 14ZM17 2h10v2H17zM17 6h10v2H17zM17 10h10v2H17z" />
              </svg>
            </Button>
          </>
        )}
      </StopRow>
      <IoPanel $bg={bg} $h={224}>
        {s.kind === 'track' && (
          <>
            <IoBlock>
              <IoLabel>MIDI From</IoLabel>
              <Select label="MIDI From" value={s.input ?? ''} />
            </IoBlock>
            <IoBlock>
              <Select label="MIDI channel" value="Ch. 1" mark="dots" />
              <IoLabel>Monitor</IoLabel>
              <Monitor>
                {monitorModes.map(([t, w]) => (
                  <Button key={t} $w={w} $bg={s.monitor === t ? (s.selected ? c.cyan : c.orange) : undefined}>
                    {t}
                  </Button>
                ))}
              </Monitor>
              <IoLabel>Audio To</IoLabel>
              <Select label="Audio To" value="Master" />
            </IoBlock>
            <Blank />
          </>
        )}
        {s.kind === 'return' && (
          <>
            <IoBlock>
              <IoLabel>Audio To</IoLabel>
              <Select label="Audio To" value="Master" />
            </IoBlock>
            <Blank />
          </>
        )}
        {s.kind === 'master' && (
          <>
            <IoBlock>
              <IoLabel>Cue Out</IoLabel>
              <Select label="Cue Out" value="1/2" mark="bars" />
              <IoSpacer />
            </IoBlock>
            <IoBlock>
              <IoLabel>Master Out</IoLabel>
              <Select label="Master Out" value="1/2" mark="bars" />
            </IoBlock>
          </>
        )}
      </IoPanel>
      {s.kind === 'master' ? (
        <MasterSends $bg={bg} $h={106}>
          <PostLabel>Sends</PostLabel>
          <PostRow>
            <PostWire $w={28} />
            <Button $w={52} $bg={c.orange}>
              Post
            </Button>
          </PostRow>
          <PostRow>
            <PostWire $w={96} />
            <Button $w={52} $bg={c.orange}>
              Post
            </Button>
          </PostRow>
        </MasterSends>
      ) : (
        <SendsPanel $bg={bg} $h={106}>
          <Knob name="Send A" letter="A" line={s.kind === 'return' ? c.dim : c.ink} />
          <SendColumn>
            <SendsLabel>Sends</SendsLabel>
            <Knob name="Send B" letter="B" line={s.kind === 'return' ? c.dim : c.ink} />
          </SendColumn>
        </SendsPanel>
      )}
      <Mixer $bg={bg} $h={238}>
        <MixColumn>
          <Field $w={70} $pill aria-label="Peak level" defaultValue="-Inf" />
          <PanBox>
            <Knob name="Pan" angle={0} centered />
          </PanBox>
          {s.activator && (
            <>
              <Button $w={46} $h={46} $bold $bg={s.selected ? c.cyan : c.orange}>
                {s.activator}
              </Button>
              <Button $w={46} aria-label="Solo">
                S
              </Button>
            </>
          )}
          {s.kind === 'track' && (
            <Button $w={46} $bg={s.armed ? c.red : undefined} aria-label="Arm">
              <svg width="16" height="16" viewBox="0 0 16 16">
                <circle cx="8" cy="8" r="8" />
                <path d="M8 3H10V10Q10 12 6 12Q4 12 4 10Q4 8 8 8Z" fill={s.armed ? c.red : c.control} />
              </svg>
            </Button>
          )}
          {s.kind === 'master' && (
            <>
              <SoloBox>
                <SoloButton $w={50} $bg={c.field}>
                  Solo
                </SoloButton>
              </SoloBox>
              <Knob name="Cue volume" angle={104} color="#4a7dff" cue />
            </>
          )}
        </MixColumn>
        <Meter bg={bg} fader={s.selected ? 37 : 23} />
      </Mixer>
    </Strip>
  );
}

const Rail = styled.div`
  flex: none;
  width: 46px;
  display: flex;
  flex-direction: column;
`;
const RailTop = styled.div`
  position: relative;
  display: flex;
  flex-direction: column;
  gap: 8px;
  height: 92px;
  padding-left: 8px;
  &::before {
    ${fillet('100% 0', c.frame)}
    left: 0;
    bottom: 0;
  }
`;
const RailBody = styled.div`
  flex: 1;
  display: flex;
  flex-direction: column;
  justify-content: flex-end;
  gap: 12px;
  padding: 0 0 14px 6px;
  background: ${c.frame};
  border-radius: 0 8px 8px 0;
`;
const RailButton = styled.button<{ $on?: boolean; $half?: 'top' | 'bottom' }>`
  width: 26px;
  height: ${(p) => (p.$half ? 24 : 26)}px;
  border-radius: ${(p) => (p.$half === 'top' ? '13px 13px 0 0' : p.$half === 'bottom' ? '0 0 13px 13px' : '13px')};
  background: ${(p) => (p.$on ? c.orange : '#0c0c0c')};
  color: ${(p) => (p.$on ? c.frame : '#8a8a8a')};
  font-size: 14px;
  font-weight: 600;
`;
const RailPair = styled.div`
  display: flex;
  flex-direction: column;
  gap: 4px;
`;

const tracks: StripData[] = [
  { name: '1 paranoid pad', color: '#94a6fa', kind: 'track', input: 'All Ins', monitor: 'Auto', activator: '1' },
  {
    name: '2 masonself ba',
    color: '#49a2e8',
    kind: 'track',
    selected: true,
    input: 'Computer Keyboard',
    monitor: 'In',
    activator: '2',
    armed: true,
  },
];
const returns: StripData[] = [
  { letter: 'A', name: 'Reverb', color: '#8cfce6', kind: 'return', activator: 'A' },
  { letter: 'B', name: 'Delay', color: '#f6f18c', kind: 'return', activator: 'B' },
  { name: 'Master', color: '#96c5fa', kind: 'master' },
];

function SessionView() {
  return (
    <>
      <Session>
        {tracks.map((t) => (
          <ChannelStrip key={t.name} {...t} />
        ))}
        <DropArea>
          <DropBand />
          Trascina qui i File e i Dispositivi
        </DropArea>
        {returns.map((t) => (
          <ChannelStrip key={t.name} {...t} />
        ))}
      </Session>
      <Rail>
        <RailTop>
          <Toggle aria-label="Arrangement view">
            <svg width="22" height="20" viewBox="0 0 22 20" fill={c.surface}>
              <path d="M0 0H22V4H0ZM0 8H22V12H0ZM0 16H22V20H0Z" />
            </svg>
          </Toggle>
          <Toggle aria-label="Session view">
            <svg width="20" height="22" viewBox="0 0 20 22" fill={c.orange}>
              <path d="M0 0H4V22H0ZM8 0H12V22H8ZM16 0H20V22H16Z" />
            </svg>
          </Toggle>
        </RailTop>
        <RailBody>
          <RailButton $on>I·O</RailButton>
          <RailPair>
            <RailButton $on $half="top">
              S
            </RailButton>
            <RailButton $on $half="bottom">
              R
            </RailButton>
          </RailPair>
          <RailButton $on>M</RailButton>
          <RailButton>D</RailButton>
          <RailButton>X</RailButton>
          <RailButton>C</RailButton>
        </RailBody>
      </Rail>
    </>
  );
}

/* ---------- device view ---------- */

const Detail = styled.section`
  display: flex;
  margin: 16px 16px 0;
  padding: 8px 6px 8px 0;
  background: ${c.deep};
  border-radius: 8px;
`;
const Grip = styled.div`
  flex: none;
  width: 30px;
  display: flex;
  align-items: center;
  justify-content: center;
`;
const Chain = styled.div`
  flex: 1;
  min-width: 0;
  display: flex;
  gap: 4px;
  border: 0 solid ${c.title};
  border-width: 0 0 4px 4px;
  border-radius: 8px 0 0 8px;
  box-shadow: 0 0 0 2px ${c.frame};
  overflow: hidden;
`;
const Device = styled.div<{ $w: number }>`
  flex: none;
  width: ${(p) => p.$w}px;
  background: ${c.surface};
`;
const TitleBar = styled.div<{ $first?: boolean }>`
  display: flex;
  align-items: center;
  gap: 6px;
  height: 34px;
  padding: 0 6px 0 ${(p) => (p.$first ? 4 : 6)}px;
  background: ${c.title};
`;
const Title = styled.span<{ $w?: number }>`
  padding-left: 2px;
  flex: ${(p) => (p.$w ? `0 0 ${p.$w}px` : '1')};
  font-weight: 600;
  white-space: nowrap;
`;
const Mpe = styled.span`
  font-size: 19px;
`;

const RackBody = styled.div`
  display: flex;
  height: 338px;
  padding: 8px 18px 6px 4px;
`;
const RackTools = styled.div`
  display: flex;
  flex-direction: column;
  gap: 8px;
  margin-right: 8px;
`;
const ToolPair = styled.div`
  display: flex;
  flex-direction: column;
  gap: 4px;
`;
const Macros = styled.div`
  display: grid;
  grid-template-columns: repeat(4, 100px);
  grid-auto-rows: 160px;
  gap: 4px;
  margin-right: 12px;
`;
const MacroBox = styled.div`
  display: flex;
  flex-direction: column;
  align-items: center;
  border: 2px solid ${c.frame};
  border-radius: 8px;
  overflow: hidden;
`;
const MacroName = styled.span`
  align-self: stretch;
  height: 56px;
  margin-bottom: 14px;
  line-height: 30px;
  text-align: center;
  background: ${c.light};
`;
const ChainPane = styled.div`
  flex: 1;
  min-width: 0;
  display: flex;
  flex-direction: column;
  padding-top: 14px;
`;
const ChainTools = styled.div`
  display: flex;
  gap: 6px;
  padding: 0 16px 12px 8px;
`;
const ChainList = styled.div`
  flex: 1;
  display: flex;
  flex-direction: column;
  border: 2px solid ${c.frame};
`;
const ChainRow = styled.div`
  display: flex;
  align-items: center;
  gap: 8px;
  height: 38px;
  border-bottom: 2px solid ${c.frame};
  background: ${c.select};
`;
const ChainName = styled.span`
  flex: none;
  width: 150px;
  height: 36px;
  padding-left: 5px;
  line-height: 36px;
  background: #49a2e8;
`;
const DropNote = styled.p`
  flex: 1;
  display: flex;
  align-items: center;
  justify-content: center;
  margin: 0;
  padding-bottom: 4px;
  text-align: center;
  line-height: 30px;
`;

const DeviceCols = styled.div<{ $cols: string }>`
  display: grid;
  grid-template-columns: ${(p) => p.$cols};
  height: 338px;
  padding-top: 12px;
`;
const Col = styled.div<{ $gap?: number }>`
  display: flex;
  flex-direction: column;
  align-items: center;
  gap: ${(p) => p.$gap ?? 0}px;
`;
const Caption = styled.span<{ $h?: number; $bold?: boolean }>`
  height: ${(p) => p.$h ?? 24}px;
  line-height: ${(p) => p.$h ?? 24}px;
  font-weight: ${(p) => (p.$bold ? 500 : 400)};
  white-space: nowrap;
`;
const Dot = styled.span`
  width: 18px;
  height: 18px;
  margin-top: 4px;
  border-radius: 50%;
  background: #606060;
`;
const ModeStack = styled.div`
  display: flex;
  flex-direction: column;
  gap: 6px;
`;
const UnitBox = styled.div`
  display: flex;
  flex-direction: column;
  align-items: center;
  width: 52px;
`;
const UnitKnob = styled.div<{ $drop: number }>`
  padding-top: ${(p) => p.$drop}px;
`;
const UnitValue = styled.span`
  height: 22px;
  margin-top: -2px;
  font-size: 19px;
  white-space: nowrap;
`;

function Unit({ label, value, drop = 0, ...knob }: { label: string; value: string; drop?: number } & Omit<KnobProps, 'name'>) {
  return (
    <UnitBox>
      <Caption>{label}</Caption>
      <UnitKnob $drop={drop}>
        <Knob name={label} {...knob} />
      </UnitKnob>
      <UnitValue>{value}</UnitValue>
    </UnitBox>
  );
}

const RangeBlock = styled.div`
  display: flex;
  flex-direction: column;
  align-items: center;
  gap: 2px;
`;

const MapPanel = styled.div`
  margin: 8px 8px 0;
  height: 326px;
  border-radius: 6px;
  background: #191919;
  overflow: hidden;
`;
const MapTable = styled.table`
  width: 100%;
  table-layout: fixed;
  border-collapse: collapse;
  color: ${c.orange};
  font-weight: 500;
  font-size: 18px;
  th {
    height: 50px;
    padding: 0 0 10px;
    font-weight: 500;
    text-align: left;
    color: #8c8c8c;
  }
  td {
    height: 44px;
    padding: 0;
    border-bottom: 2px solid ${c.deep};
    white-space: nowrap;
  }
  tr:last-child td { border-bottom: 0; }
  tr > :first-child { padding-left: 8px; }
`;
const Inline = styled.div<{ $gap?: number; $pad?: number; $between?: boolean }>`
  display: flex;
  align-items: center;
  gap: ${(p) => p.$gap ?? 6}px;
  padding-left: ${(p) => p.$pad ?? 0}px;
  justify-content: ${(p) => (p.$between ? 'space-between' : 'flex-start')};
`;
const SourceCell = styled(Inline)`
  padding: 0 12px 0 4px;
`;
const Outline = styled.div`
  width: 76px;
  height: 26px;
  border: 2px solid ${c.deep};
`;
const Fill = styled.div`
  height: 22px;
  background: ${c.orange};
`;
const MapButton = styled.button<{ $w: number; $on?: boolean }>`
  width: ${(p) => p.$w}px;
  height: 26px;
  border: 2px solid ${c.orange};
  background: ${(p) => (p.$on ? c.orange : 'transparent')};
  color: ${(p) => (p.$on ? c.ink : c.orange)};
  font-size: 18px;
  line-height: 20px;
  font-weight: 500;
`;
const ClearButton = styled.button`
  width: 26px;
  height: 26px;
  background: none;
`;

const mapRows: { src: string; map?: string; amt?: string; min: string; max: string; out?: number }[] = [
  { src: 'Velocity', map: 'Osc-B Level', min: '49 %', max: '100 %', out: 49 },
  { src: 'Velocity', map: 'Be Attack', min: '78 %', max: '0 %', out: 78 },
  { src: 'Pitchbend', min: '0 %', max: '100 %' },
  { src: 'Aftertouch', min: '0 %', max: '100 %' },
  { src: 'Random', map: 'A Fine', amt: '50 %', min: '0 %', max: '2 %' },
  { src: 'Incremental', map: 'Tone', amt: '27', min: '0 %', max: '80 %' },
];

function ExpressionTable() {
  return (
    <MapPanel>
      <MapTable>
        <colgroup>
          {[166, 84, 180, 76, 70, 74, 104, 88, 88, 84, 34].map((w, i) => (
            <col key={i} style={{ width: w }} />
          ))}
        </colgroup>
        <thead>
          <tr>
            {['MIDI In', 'Input', 'Mapping', 'Amt', 'Min', 'Max', 'Shape', 'Rise', 'Fall', 'Output'].map((t) => (
              <th key={t}>{t}</th>
            ))}
            <th>
              <MapButton $w={26} aria-label="Curve view">
                <svg width="22" height="22" viewBox="0 0 22 22" fill="none" stroke={c.orange} strokeWidth="2">
                  <path d="M4 18Q10 18 11 11T18 4" />
                </svg>
              </MapButton>
            </th>
          </tr>
        </thead>
        <tbody>
          {mapRows.map((r, i) => (
            <tr key={i}>
              <td>
                <SourceCell $between>
                  {r.src}
                  <svg width="13" height="9" viewBox="0 0 13 9">
                    <path d="M0 0H13L6.500 9Z" fill={c.orange} />
                  </svg>
                </SourceCell>
              </td>
              <td>
                <Outline />
              </td>
              <td>
                <Inline>
                  <MapButton $w={148} $on={!!r.map}>
                    {r.map ?? 'Map'}
                  </MapButton>
                  {r.map && (
                    <ClearButton aria-label="Clear mapping">
                      <svg width="26" height="26" viewBox="0 0 26 26" fill="none" stroke={c.orange} strokeWidth="2">
                        <circle cx="13" cy="13" r="12" />
                        <path d="M8 8L18 18M18 8L8 18" />
                      </svg>
                    </ClearButton>
                  )}
                </Inline>
              </td>
              <td>
                <Inline $pad={12}>{r.amt}</Inline>
              </td>
              <td>
                <Inline $pad={4}>{r.min}</Inline>
              </td>
              <td>
                <Inline $pad={2}>{r.max}</Inline>
              </td>
              <td>
                <Inline>
                  <MapButton $w={46} $on>
                    Log
                  </MapButton>
                  <MapButton $w={46}>Lin</MapButton>
                </Inline>
              </td>
              <td>
                <Inline $pad={4}>0.00 ms</Inline>
              </td>
              <td>
                <Inline $pad={4}>0.00 ms</Inline>
              </td>
              <td>
                <Outline>{r.out && <Fill style={{ width: `${r.out}%` }} />}</Outline>
              </td>
              <td />
            </tr>
          ))}
        </tbody>
      </MapTable>
    </MapPanel>
  );
}

const NoteGrid = styled.div`
  display: grid;
  grid-template-columns: 126px 134px;
  grid-template-rows: 116px 105px 1fr;
  height: 338px;
  padding-top: 7px;
  justify-items: center;
`;
const TriggerStack = styled.div`
  display: flex;
  flex-direction: column;
  width: 102px;
`;
const LowerUnit = styled.div`
  padding-top: 11px;
`;

const AzimuthBox = styled.div`
  flex: 1;
  min-width: 0;
  display: flex;
`;
const AzimuthLeft = styled.div`
  flex: none;
  width: 430px;
  background: ${c.light};
`;
const OscList = styled.div`
  display: flex;
  flex-direction: column;
  gap: 6px;
`;
const OscRow = styled.div<{ $plain?: boolean }>`
  display: grid;
  grid-template-columns: 117px 87px 64px 101px 26px;
  width: 424px;
  height: ${(p) => (p.$plain ? 78 : 80)}px;
  margin-top: ${(p) => (p.$plain ? 2 : 0)}px;
  padding: 3px 0 0 13px;
  border-radius: 0 8px 8px 0;
  background: ${(p) => (p.$plain ? 'transparent' : c.surface)};
`;
const OscCell = styled.div`
  display: flex;
  flex-direction: column;
`;
const OscLabel = styled.span`
  height: 31px;
  line-height: 24px;
`;
const OscKnob = styled.div`
  display: grid;
  height: 46px;
  > * { grid-area: 1 / 1; }
`;
const OscValue = styled.span`
  align-self: end;
  margin-left: 26px;
  line-height: 20px;
  font-size: 19px;
  white-space: nowrap;
`;
const FixedBox = styled.input`
  appearance: none;
  width: 18px;
  height: 18px;
  margin: 8px 0 0 13px;
  border: 2px solid ${c.deep};
  background: ${c.control};
`;
const Badge = styled.button<{ $bg: string }>`
  width: 26px;
  height: 26px;
  margin-top: 25px;
  border: 2px solid ${c.deep};
  background: ${(p) => p.$bg};
  font-size: 16px;
  font-weight: 600;
`;

const oscs: { id: string; color: string; knobs: [string, number, string, number, string, number]; grayFine?: boolean; grayLevel?: boolean }[] = [
  { id: 'D', color: '#e57a35', knobs: ['7', -143, '0', -180, '-35 dB', -111] },
  { id: 'C', color: '#5f74f0', knobs: ['7', -143, '308', -95, '-0.6 dB', 87] },
  { id: 'B', color: '#63d3cb', knobs: ['8', -140, '0', -180, '-20 dB', -47], grayLevel: true },
  { id: 'A', color: '#e0d84e', knobs: ['0.5', -180, '0', -180, '0.0 dB', 90], grayFine: true },
];

function Osc({ o }: { o: (typeof oscs)[number] }) {
  const [cv, ca, fv, fa, lv, la] = o.knobs;
  return (
    <OscRow $plain={o.id === 'A'}>
      <OscCell>
        <OscLabel>Coarse</OscLabel>
        <OscKnob>
          <Knob small name={`Coarse ${o.id}`} angle={ca} color={c.cyan} />
          <OscValue>{cv}</OscValue>
        </OscKnob>
      </OscCell>
      <OscCell>
        <OscLabel>Fine</OscLabel>
        <OscKnob>
          <Knob small name={`Fine ${o.id}`} angle={fa} color={c.cyan} line={o.grayFine ? c.dim : c.ink} />
          <OscValue>{fv}</OscValue>
        </OscKnob>
      </OscCell>
      <OscCell as="label">
        <OscLabel>Fixed</OscLabel>
        <FixedBox type="checkbox" />
      </OscCell>
      <OscCell>
        <OscLabel>Level</OscLabel>
        <OscKnob>
          <Knob
            small
            name={`Level ${o.id}`}
            angle={la}
            color={o.grayLevel ? c.field : c.cyan}
            line={o.grayLevel ? c.dim : c.ink}
          />
          <OscValue>{lv}</OscValue>
        </OscKnob>
      </OscCell>
      <Badge $bg={o.color}>{o.id}</Badge>
    </OscRow>
  );
}

const EnvWrap = styled.div`
  flex: 1;
  min-width: 0;
  padding: 6px 0 2px;
  background: ${c.title};
`;
const EnvPanel = styled.div`
  height: 364px;
  padding: 8px 0 0 8px;
  border-radius: 8px 0 0 8px;
  background: #191919;
  overflow: hidden;
`;
const EnvHead = styled.label`
  display: flex;
  align-items: center;
  gap: 4px;
  height: 28px;
  border-bottom: 2px solid ${c.surface};
  color: #9a9a9a;
`;
const EnvBox = styled.input`
  appearance: none;
  width: 14px;
  height: 14px;
  background: ${c.cyan};
`;
const EnvGrid = styled.div`
  display: grid;
  grid-template-columns: 100px 86px 90px;
  grid-auto-rows: 60px;
  padding: 6px 0 0 2px;
`;
const EnvName = styled.div`
  line-height: 26px;
  color: #9a9a9a;
`;
const EnvValue = styled.div`
  display: flex;
  align-items: center;
  gap: 28px;
  padding-left: 4px;
  line-height: 30px;
  font-size: 19px;
  color: ${c.cyan};
  white-space: nowrap;
`;

const env: [string, string][] = [
  ['Attack', '0.81 ms'],
  ['Decay', '1.49 s'],
  ['Release', '104 ms'],
  ['Initial', '-inf dB'],
  ['Peak', '0.0 dB'],
  ['Sustain', '0.0 dB'],
];

function Devices() {
  return (
    <Detail>
      <Grip>
        <svg width="6" height="80" viewBox="0 0 6 80" fill={c.ink}>
          {Array.from({ length: 10 }, (_, i) => (
            <circle key={i} cx="3" cy={4 + i * 8} r="3" />
          ))}
        </svg>
      </Grip>
      <Chain>
        <Device $w={946}>
          <TitleBar $first>
            <RoundButton $bg={c.orange} aria-label="Device on" />
            <Title $w={373}>masonself bass drum</Title>
            <Button $w={60} $pill>
              Rand
            </Button>
            <Button $w={50}>Map</Button>
            <Push />
            <Swap />
            <Save />
          </TitleBar>
          <RackBody>
            <RackTools>
              <RoundButton $plain $bg={c.orange} aria-label="Show macros">
                <svg width="20" height="20" viewBox="0 0 20 20" fill="none" stroke="#9a8458" strokeWidth="3">
                  <path d="M5 16A8 8 0 1 1 15 16" />
                  <path d="M10 9L16 18" />
                </svg>
              </RoundButton>
              <ToolPair>
                <RoundButton aria-label="Add macro">
                  <svg width="12" height="12" viewBox="0 0 12 12" stroke="#000" strokeWidth="2">
                    <path d="M6 0V12M0 6H12" />
                  </svg>
                </RoundButton>
                <RoundButton aria-label="Remove macro">
                  <svg width="12" height="12" viewBox="0 0 12 12" stroke="#000" strokeWidth="2">
                    <path d="M1 6H11" />
                  </svg>
                </RoundButton>
              </ToolPair>
              <RoundButton $plain $bg="#0c0c0c" aria-label="Macro variations">
                <svg width="14" height="14" viewBox="0 0 14 14">
                  <path d="M0 2H4V0H10V2H14V14H0Z" fill="#a8a8a8" />
                  <path d="M6 5h2v2h2v2H8v2H6V9H4V7h2z" />
                </svg>
              </RoundButton>
              <RoundButton $plain $bg={c.orange} aria-label="Show devices">
                <svg width="18" height="12" viewBox="0 0 18 12" fill="none" stroke="#9a8458" strokeWidth="2">
                  <rect x="1" y="1" width="16" height="10" rx="2" />
                  <path d="M1 4H17" />
                </svg>
              </RoundButton>
              <RoundButton $plain $bg={c.orange} aria-label="Show chains">
                <svg width="16" height="12" viewBox="0 0 16 12" stroke="#9a8458" strokeWidth="2">
                  <path d="M0 2H3M5 2H16M0 6H3M5 6H16M0 10H3M5 10H16" />
                </svg>
              </RoundButton>
            </RackTools>
            <Macros>
              {[1, 2, 3, 4, 5, 6, 7, 8].map((n) => (
                <MacroBox key={n}>
                  <MacroName>Macro {n}</MacroName>
                  <Knob name={`Macro ${n}`} line={c.dim} />
                  <span>0</span>
                </MacroBox>
              ))}
            </Macros>
            <ChainPane>
              <ChainTools>
                <Button $w={36} aria-label="Auto select">
                  <svg width="18" height="14" viewBox="0 0 18 14">
                    <path d="M0 4h2v6H0zM4 4h2v6H4zM8 4h2V0l8 7-8 7v-4H8z" />
                  </svg>
                </Button>
                <Push />
                <Button $w={60}>Key</Button>
                <Button $w={60}>Vel</Button>
                <Button $w={60}>Chain</Button>
                <Button $w={60} $bg={c.cyan}>
                  Nasc.
                </Button>
              </ChainTools>
              <ChainList>
                <ChainRow>
                  <ChainName>Azimuth Bass</ChainName>
                  <svg width="4" height="30" viewBox="0 0 4 30">
                    <path d="M2 2V28" stroke="#000" strokeWidth="5" strokeDasharray="5 1" />
                  </svg>
                  <Field $w={76} $bg={`linear-gradient(90deg, ${c.cyan} 62px, ${c.field} 62px)`} aria-label="Chain volume" defaultValue="0.0 dB" />
                  <Field $w={76} aria-label="Chain pan" defaultValue="C" />
                  <Button $w={32} $bg={c.orange} aria-label="Chain active">
                    <svg width="12" height="16" viewBox="0 0 12 16" fill="none" stroke="#000" strokeWidth="2">
                      <path d="M1 5H5V11H1ZM5 5L11 1V15L5 11" />
                    </svg>
                  </Button>
                  <Button $w={32} aria-label="Chain solo">
                    S
                  </Button>
                  <Swap />
                  <svg width="10" height="30" viewBox="0 0 10 30">
                    <path d="M0 0h4v2H0zM6 0h4v2H6zM0 4h4v26H0zM6 4h4v26H6z" fill={c.ink} />
                  </svg>
                </ChainRow>
                <DropNote>
                  Trascina qui uno Strumento o<br />
                  un Campione
                </DropNote>
              </ChainList>
            </ChainPane>
          </RackBody>
        </Device>

        <Device $w={336}>
          <TitleBar>
            <RoundButton $bg={c.orange} aria-label="Device on" />
            <Title>Velocity</Title>
            <Swap />
            <Save />
          </TitleBar>
          <DeviceCols $cols="152px 80px 110px">
            <Col>
              <svg width="128" height="128" viewBox="0 0 128 128" fill="none">
                <rect width="128" height="128" rx="6" fill="#191919" />
                <path d="M32 0V128M64 0V128M96 0V128M0 32H128M0 64H128M0 96H128" stroke="#4a4a4a" strokeWidth="2" />
                <path d="M1 126C44 126 88 74 126 3" stroke={c.orange} strokeWidth="3" />
              </svg>
              <Dot />
              <Caption $bold $h={26}>
                Operation
              </Caption>
              <Select label="Operation" value="Both" w={102} />
              <Caption $bold $h={26}>
                Mode
              </Caption>
              <ModeStack>
                <Button $w={102} $bg={c.orange}>
                  Clip
                </Button>
                <Button $w={102}>Gate</Button>
                <Button $w={102}>Fixed</Button>
              </ModeStack>
            </Col>
            <Col $gap={6}>
              <Unit label="Drive" value="-0.24" angle={-34} centered color={c.cyan} />
              <Unit label="Comp." value="0.00" angle={0} centered />
              <Unit label="Random" value="0" />
            </Col>
            <Col $gap={3}>
              <Unit label="Out Hi" value="127" angle={152} color={c.cyan} drop={14} />
              <Unit label="Out Low" value="1" drop={14} />
              <RangeBlock>
                <Caption $bold $h={18}>
                  Range
                </Caption>
                <Field $bg={c.cyan} aria-label="Range" defaultValue="127" />
                <Caption $bold $h={20}>
                  Lowest
                </Caption>
                <Field aria-label="Lowest" defaultValue="1" />
              </RangeBlock>
            </Col>
          </DeviceCols>
        </Device>

        <Device $w={1064}>
          <TitleBar>
            <RoundButton $bg={c.orange} aria-label="Device on" />
            <Title>Expression Control</Title>
            <Mpe>MPE</Mpe>
            <RoundButton aria-label="MPE settings">
              <svg width="16" height="16" viewBox="0 0 16 16" fill="none" stroke="#000" strokeWidth="2">
                <path d="M2 4H14V12H2ZM4 1V4M12 1V4M4 12V15M12 12V15" />
              </svg>
            </RoundButton>
            <Swap />
            <Save />
          </TitleBar>
          <ExpressionTable />
        </Device>

        <Device $w={264}>
          <TitleBar>
            <RoundButton $bg={c.orange} aria-label="Device on" />
            <Title>Note Length</Title>
            <Swap />
            <Save />
          </TitleBar>
          <NoteGrid>
            <TriggerStack>
              <Caption>Trigger</Caption>
              <Button $w={102} $bg={c.orange}>
                Note On
              </Button>
              <Caption $h={30}>Mode</Caption>
              <Button $w={102} $bg={c.orange}>
                Time
              </Button>
            </TriggerStack>
            <Unit label="Release Vel." value="34 %" angle={-47} color={c.field} line={c.dim} />
            <Unit label="Length" value="590 ms" angle={-9} color={c.cyan} />
            <Unit label="Decay Time" value="1.77 s" angle={27} color={c.field} line={c.dim} />
            <LowerUnit>
              <Unit label="Gate" value="100 %" angle={0} color={c.cyan} />
            </LowerUnit>
            <Unit label="Key Scale" value="0.00" angle={0} centered line={c.dim} />
          </NoteGrid>
        </Device>

        <AzimuthBox>
          <AzimuthLeft>
            <TitleBar>
              <RoundButton $bg={c.orange} aria-label="Device on" />
              <RoundButton aria-label="Unfold">
                <svg width="14" height="16" viewBox="0 0 14 16">
                  <path d="M1 0L14 8L1 16Z" />
                </svg>
              </RoundButton>
              <Title>Azimuth Bass</Title>
            </TitleBar>
            <OscList>
              {oscs.map((o) => (
                <Osc key={o.id} o={o} />
              ))}
            </OscList>
          </AzimuthLeft>
          <EnvWrap>
            <EnvPanel>
              <svg width="232" height="138" viewBox="0 0 232 138" fill="none">
                <path d="M1 18V1H18M1 120V135H18" stroke={c.cyan} strokeWidth="2" />
                <path d="M10 126L40 11H232" stroke={c.cyan} strokeWidth="3" />
                <path d="M4 120H15V131H4ZM34 5H45V16H34ZM156 5H167V16H156Z" stroke={c.orange} strokeWidth="2" />
              </svg>
              <EnvHead>
                <EnvBox type="checkbox" defaultChecked />
                Envelope
              </EnvHead>
              <EnvGrid>
                {env.map(([n, v]) => (
                  <div key={n}>
                    <EnvName>{n}</EnvName>
                    <EnvValue>{v}</EnvValue>
                  </div>
                ))}
                <div>
                  <EnvName>Loop</EnvName>
                  <EnvValue>
                    None
                    <svg width="10" height="6" viewBox="0 0 10 6">
                      <path d="M0 0H10L5 6Z" fill={c.cyan} />
                    </svg>
                  </EnvValue>
                </div>
              </EnvGrid>
            </EnvPanel>
          </EnvWrap>
        </AzimuthBox>
      </Chain>
    </Detail>
  );
}

/* ---------- status bar ---------- */

const Status = styled.footer`
  display: flex;
  align-items: flex-end;
  gap: 16px;
  height: 60px;
  margin: 0 16px 16px;
`;
const StatusBox = styled.div<{ $w?: number }>`
  flex: ${(p) => (p.$w ? `0 0 ${p.$w}px` : '1')};
  height: 44px;
  border: 6px solid ${c.frame};
  border-radius: 6px;
  background: ${c.surface};
`;
const StatusToggle = styled(Toggle)`
  margin-bottom: 4px;
`;
const ClipTab = styled.div`
  position: relative;
  flex: none;
  display: flex;
  align-items: center;
  justify-content: space-between;
  width: 610px;
  height: 60px;
  padding: 16px 6px 0 9px;
  background: ${c.deep};
  border-radius: 0 0 8px 8px;
  font-weight: 500;
  &::before {
    ${fillet('0 100%', c.deep)}
    left: -8px;
    top: 0;
  }
  &::after {
    ${fillet('100% 100%', c.deep)}
    right: -8px;
    top: 0;
  }
`;

const overviewKnobs = [
  [8, 15], [16, 15], [24, 15], [32, 15], [8, 30], [16, 30], [24, 30], [32, 30],
  [93, 13], [101, 13], [93, 23], [101, 23], [93, 32], [225, 23], [225, 32], [234, 12], [234, 22], [234, 32],
  [246, 11], [252, 11], [246, 18], [252, 18], [246, 25], [252, 25], [304, 12], [314, 22], [326, 32], [346, 14], [346, 28],
];

const Overview = () => (
  <svg width="360" height="40" viewBox="0 0 360 40">
    <path d="M4 4H36V36H4ZM38 4H77V36H38ZM79 4H105V36H79ZM106 4H192V36H106ZM193 4H214V36H193ZM215 4H250V36H215ZM298 4H336V36H298ZM340 4H358V36H340Z" fill="#868686" />
    <path d="M4 4H250V7H4ZM298 4H336V7H298ZM340 4H358V7H340Z" fill="#9fb4c2" />
    <path d="M250 4H298V36H250Z" fill="#101418" />
    <path d="M4 21H36M12 7V36M20 7V36M28 7V36" stroke="#606060" />
    {overviewKnobs.map(([x, y]) => (
      <circle key={`${x}-${y}`} cx={x} cy={y} r="2.500" fill="none" stroke="#5a5a5a" />
    ))}
    <path d="M39 13H50V15H39Z" fill="#3a86c4" />
    <path d="M51 13H60V15H51ZM66 9H74V11H66ZM99 29H104V32H99Z" fill="#7ab8cc" />
    <path d="M79 8H90V19H79Z" fill="#191919" />
    <path d="M79 18Q85 17 90 8M80 29H88M194 10H202M194 15H202M350 15H356M342 35H350M278 33H282M62 14H66" stroke={c.orange} strokeWidth="2" fill="none" />
    <path d="M264 6H272V18H298M250 20H262M266 20H286M250 26H286" stroke="#4c7f90" fill="none" />
    <path d="M352 17V36M356 17V36" stroke="#222" />
    <path d="M2 2H256V38H2Z" fill="none" stroke="#000" strokeWidth="4" />
    <text x="106" y="30" fontSize="17" fontWeight="400">
      Expression
    </text>
  </svg>
);

function StatusBar() {
  return (
    <Status>
      <StatusToggle aria-label="Info view">
        <svg width="24" height="24" viewBox="0 0 24 24">
          <path d="M2 2L23 12L2 22Z" fill="#a2a2a2" stroke="#a2a2a2" strokeWidth="2" strokeLinejoin="round" />
        </svg>
      </StatusToggle>
      <StatusBox />
      <StatusBox $w={412} />
      <ClipTab>
        2-masonself bass drum
        <Overview />
      </ClipTab>
      <StatusToggle aria-label="Device view">
        <svg width="22" height="24" viewBox="0 0 22 24">
          <path d="M11 2L20 22H2Z" fill="#a2a2a2" stroke="#a2a2a2" strokeWidth="3" strokeLinejoin="round" />
        </svg>
      </StatusToggle>
    </Status>
  );
}

export default function App() {
  return (
    <>
      <Global />
      <Page>
        <TopBar />
        <Main>
          <BrowserPane />
          <SessionView />
        </Main>
        <Devices />
        <StatusBar />
      </Page>
    </>
  );
}
